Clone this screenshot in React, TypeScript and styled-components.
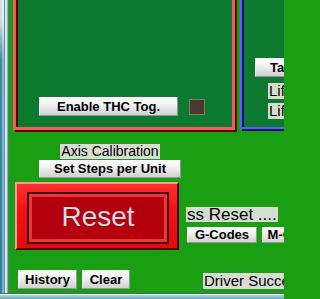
import React from 'react';
import styled, { createGlobalStyle } from 'styled-components';

const GlobalStyle = createGlobalStyle`
  html, body {
    margin: 0;
    padding: 0;
    overflow: hidden;
    background: #1a9e12;
  }
  body {
    font-family: 'Liberation Sans', Arial, sans-serif;
  }
`;

const Window = styled.div`
  width: 284px;
  height: 299px;
  display: flex;
  flex-direction: column;
  overflow: hidden;
`;

const Body = styled.div`
  display: flex;
  height: 293px;
  flex-shrink: 0;
`;

const LeftChrome = styled.div`
  width: 9px;
  flex-shrink: 0;
  background:
    linear-gradient(to right, transparent 0 4px, #5a93a6 4px 5px, #dde7ea 5px 7px, #8eb0b5 7px 8px, #3d7e84 8px 9px),
    linear-gradient(to right, transparent 0 2px, rgba(255, 255, 255, 0.4) 2px 4px, transparent 4px),
    linear-gradient(to bottom, #d4e0ec 0, #c9dbe8 22px, #3d8aab 60px, #2f7fa2 100%);
`;

const BottomChrome = styled.div`
  height: 6px;
  flex-shrink: 0;
  background: linear-gradient(to bottom, #4b6a5e 0 1px, #eef3f3 1px 2px, #a9cdd2 2px 3px, #5aa6b8 100%);
`;

const Canvas = styled.main`
  flex: 1;
  min-width: 0;
  background: #1a9e12;
  overflow: hidden;
  display: flex;
  flex-direction: column;
`;

// the panels continue above the visible area, so the row starts a little above the top edge
const TopRow = styled.div`
  display: flex;
  align-items: flex-start;
  gap: 5px;
  margin-top: -6px;
  padding-left: 4px;
  height: 136px;
  flex-shrink: 0;
`;

type PanelProps = { $light: string; $dark: string; $edge: number; $w: number; $h: number };

const Panel = styled.section<PanelProps>`
  box-sizing: border-box;
  flex-shrink: 0;
  width: ${p => p.$w}px;
  height: ${p => p.$h}px;
  background: #0c7a2e;
  border: ${p => p.$edge}px solid ${p => p.$light};
  box-shadow: 2px 2px 0 ${p => p.$dark}, inset 2px 2px 0 ${p => p.$dark};
  display: flex;
`;

const ThcPanel = styled(Panel)`
  align-items: flex-end;
  padding: 0 0 11px 23px;
`;

const CommandPanel = styled(Panel)`
  flex-direction: column;
  align-items: flex-start;
  padding: 62px 0 0 13px;
`;

const ThcRow = styled.div`
  display: flex;
  align-items: center;
  gap: 11px;
`;

const Button = styled.button<{ $w: number; $h?: number }>`
  box-sizing: border-box;
  flex-shrink: 0;
  width: ${p => p.$w}px;
  height: ${p => p.$h ?? 19}px;
  margin: 0;
  padding: 0;
  border: 0;
  border-radius: 1px;
  background: linear-gradient(to bottom, #ffffff 0%, #f1f1f1 40%, #cdcdcd 100%);
  box-shadow: inset -1px -1px 0 #979797, inset 1px 1px 0 #fafafa;
  font: bold 13px 'Liberation Sans', Arial, sans-serif;
  color: #000;
  line-height: ${p => p.$h ?? 19}px;
  text-align: center;
  white-space: nowrap;
  overflow: hidden;
`;

const TabButton = styled(Button)`
  text-align: left;
  padding-left: 15px;
`;

const Indicator = styled.div`
  box-sizing: border-box;
  width: 16px;
  height: 16px;
  background: #4a3a30;
  border: 1px solid #7c7b6c;
  flex-shrink: 0;
`;

const Label = styled.div<{ $size: number; $h: number }>`
  flex-shrink: 0;
  height: ${p => p.$h}px;
  line-height: ${p => p.$h}px;
  padding: 0 1px;
  background: #d8ddd3;
  font-size: ${p => p.$size}px;
  color: #000;
  white-space: nowrap;
`;

const LiftLabel = styled(Label)<{ $gap: number }>`
  margin: ${p => p.$gap}px 0 0 13px;
`;

const Lower = styled.div`
  display: flex;
  align-items: flex-start;
`;

const LeftCol = styled.div`
  width: 164px;
  margin-left: 6px;
  display: flex;
  flex-direction: column;
  flex-shrink: 0;
`;

const CalibGroup = styled.div`
  width: 142px;
  margin: 14px 0 0 24px;
  display: flex;
  flex-direction: column;
  align-items: center;
  gap: 1px;
`;

const ResetFrame = styled.div`
  box-sizing: border-box;
  display: flex;
  width: 164px;
  height: 68px;
  margin-top: 4px;
  padding: 8px 8px 4px 10px;
  background: linear-gradient(to bottom, #ff3030 0%, #f01414 40%, #e00c0c 100%);
  border: 2px solid;
  border-color: #ff9a9a #5a0000 #5a0000 #ff9a9a;
`;

const ResetFace = styled.button`
  flex: 1;
  margin: 0;
  padding: 0 0 2px;
  border: 2px solid #4a0000;
  box-shadow: inset 0 0 0 3px #e83838;
  background: #b3000c;
  display: flex;
  align-items: center;
  justify-content: center;
  font: 28px 'Liberation Sans', Arial, sans-serif;
  color: #c8dde6;
`;

const ActionRow = styled.div`
  display: flex;
  gap: 5px;
  margin: 20px 0 0 3px;
`;

const RightCol = styled.div`
  display: flex;
  flex-direction: column;
  align-items: flex-start;
  padding-top: 77px;
  margin-left: 7px;
  flex-shrink: 0;
`;

const CodeRow = styled.div`
  display: flex;
  gap: 5px;
  margin: 5px 0 0 1px;
`;

const StatusLabel = styled(Label)`
  margin: 30px 0 0 17px;
`;

export default function App() {
  return (
    <Window>
      <GlobalStyle />
      <Body>
        <LeftChrome />
        <Canvas>
          <TopRow>
            <ThcPanel $light="#f25c5c" $dark="#5a0505" $edge={3} $w={222} $h={136}>
              <ThcRow>
                <Button $w={139}>Enable THC Tog.</Button>
                <Indicator />
              </ThcRow>
            </ThcPanel>
            <CommandPanel $light="#5c5cff" $dark="#12126a" $edge={2} $w={80} $h={135}>
              <TabButton $w={70}>Tab</TabButton>
              <LiftLabel $size={15} $h={16} $gap={6}>Lift</LiftLabel>
              <LiftLabel $size={15} $h={16} $gap={4}>Lift</LiftLabel>
            </CommandPanel>
          </TopRow>
          <Lower>
            <LeftCol>
              <CalibGroup>
                <Label $size={14} $h={15}>Axis Calibration</Label>
                <Button $w={142} $h={18}>Set Steps per Unit</Button>
              </CalibGroup>
              <ResetFrame>
                <ResetFace>Reset</ResetFace>
              </ResetFrame>
              <ActionRow>
                <Button $w={59}>History</Button>
                <Button $w={48}>Clear</Button>
              </ActionRow>
            </LeftCol>
            <RightCol>
              <Label $size={17} $h={15}>ss Reset ....</Label>
              <CodeRow>
                <Button $w={70} $h={16}>G-Codes</Button>
                <Button $w={66} $h={16}>M-Codes</Button>
              </CodeRow>
              <StatusLabel $size={15} $h={16}>Driver Successfully Loaded</StatusLabel>
            </RightCol>
          </Lower>
        </Canvas>
      </Body>
      <BottomChrome />
    </Window>
  );
}
